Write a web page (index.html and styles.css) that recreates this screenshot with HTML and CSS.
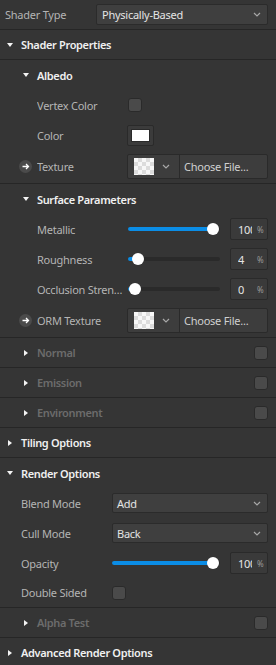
FILE: index.html
```html
<!DOCTYPE html>
<html>

<head>
    <title>Material Inspector</title>
    <meta charset="utf-8">
    <link rel="stylesheet" href="styles.css">
</head>

<body>

    <div class="inspector">

        <div class="row top sep">
            <span class="label">Shader Type</span>
            <div class="select">
                <span>Physically-Based</span>
                <svg class="chev" width="8" height="5" viewBox="0 0 8 5"><path d="M1 1 L4 4 L7 1" /></svg>
            </div>
        </div>

        <section class="panel">
            <div class="head l1 sep"><i class="tri open"></i><span>Shader Properties</span></div>

            <section class="panel">
                <div class="head l2"><i class="tri open"></i><span>Albedo</span></div>
                <div class="row l2">
                    <span class="label">Vertex Color</span>
                    <span class="check"></span>
                </div>
                <div class="row l2">
                    <span class="label">Color</span>
                    <span class="swatch"><span></span></span>
                </div>
                <div class="row tall l2 linked sep">
                    <span class="link"><svg width="13" height="13" viewBox="0 0 13 13"><path d="M3.5 6.5 H9.5 M7 4 L9.5 6.5 L7 9" /></svg></span>
                    <span class="label">Texture</span>
                    <div class="asset">
                        <span class="thumb"><span class="checker"></span>
                            <svg class="chev" width="8" height="5" viewBox="0 0 8 5"><path d="M1 1 L4 4 L7 1" /></svg>
                        </span>
                        <span class="file">Choose File...</span>
                    </div>
                </div>
            </section>

            <section class="panel">
                <div class="head l2"><i class="tri open"></i><span>Surface Parameters</span></div>
                <div class="row l2">
                    <span class="label">Metallic</span>
                    <div class="slider" style="--v: 1"><span class="fill"></span><span class="knob"></span></div>
                    <span class="num"><span class="val">100</span><span class="pct">%</span></span>
                </div>
                <div class="row l2">
                    <span class="label">Roughness</span>
                    <div class="slider" style="--v: 0.04"><span class="fill"></span><span class="knob"></span></div>
                    <span class="num"><span class="val">4</span><span class="pct">%</span></span>
                </div>
                <div class="row l2">
                    <span class="label">Occlusion Strength</span>
                    <div class="slider" style="--v: 0"><span class="fill"></span><span class="knob"></span></div>
                    <span class="num"><span class="val">0</span><span class="pct">%</span></span>
                </div>
                <div class="row tall l2 linked sep">
                    <span class="link"><svg width="13" height="13" viewBox="0 0 13 13"><path d="M3.5 6.5 H9.5 M7 4 L9.5 6.5 L7 9" /></svg></span>
                    <span class="label">ORM Texture</span>
                    <div class="asset">
                        <span class="thumb"><span class="checker"></span>
                            <svg class="chev" width="8" height="5" viewBox="0 0 8 5"><path d="M1 1 L4 4 L7 1" /></svg>
                        </span>
                        <span class="file">Choose File...</span>
                    </div>
                </div>
            </section>

            <section class="panel">
                <div class="head l2 off sep"><i class="tri"></i><span>Normal</span><span class="check"></span></div>
            </section>
            <section class="panel">
                <div class="head l2 off sep"><i class="tri"></i><span>Emission</span><span class="check"></span></div>
            </section>
            <section class="panel">
                <div class="head l2 off sep"><i class="tri"></i><span>Environment</span><span class="check"></span></div>
            </section>
        </section>

        <section class="panel">
            <div class="head l1 sep"><i class="tri"></i><span>Tiling Options</span></div>
        </section>

        <section class="panel">
            <div class="head l1"><i class="tri open"></i><span>Render Options</span></div>
            <div class="row l1">
                <span class="label">Blend Mode</span>
                <div class="select short">
                    <span>Add</span>
                    <svg class="chev" width="8" height="5" viewBox="0 0 8 5"><path d="M1 1 L4 4 L7 1" /></svg>
                </div>
            </div>
            <div class="row l1">
                <span class="label">Cull Mode</span>
                <div class="select short">
                    <span>Back</span>
                    <svg class="chev" width="8" height="5" viewBox="0 0 8 5"><path d="M1 1 L4 4 L7 1" /></svg>
                </div>
            </div>
            <div class="row l1">
                <span class="label">Opacity</span>
                <div class="slider" style="--v: 1"><span class="fill"></span><span class="knob"></span></div>
                <span class="num"><span class="val">100</span><span class="pct">%</span></span>
            </div>
            <div class="row l1 sep">
                <span class="label">Double Sided</span>
                <span class="check"></span>
            </div>
            <section class="panel">
                <div class="head l2 off sep"><i class="tri"></i><span>Alpha Test</span><span class="check"></span></div>
            </section>
        </section>

        <section class="panel">
            <div class="head l1 sep"><i class="tri"></i><span>Advanced Render Options</span></div>
        </section>

    </div>

</body>

</html>
```

FILE: styles.css
```css
* {
    box-sizing: border-box;
}

body {
    margin: 0;
    background: #353535;
    font-family: "Noto Sans", "Open Sans", sans-serif;
    font-size: 11px;
    letter-spacing: -0.25px;
    color: #b4b4b4;
    overflow: hidden;
}

.inspector {
    width: 276px;
}

.sep {
    border-bottom: 1px solid #262626;
}

/* rows */

.row {
    display: flex;
    align-items: center;
    height: 30px;
    padding-right: 8px;
}

.row.tall {
    height: 34px;
}

.row.top {
    padding-left: 5px;
}

.row.l1 {
    padding-left: 21px;
}

.row.l2 {
    padding-left: 37px;
}

.row.linked {
    padding-left: 19px;
}

.label {
    width: 91px;
    flex: none;
    white-space: nowrap;
    overflow: hidden;
    text-overflow: ellipsis;
    padding-right: 4px;
}

/* headers */

.head {
    display: flex;
    align-items: center;
    height: 30px;
    padding-right: 8px;
    color: #f0f0f0;
    font-weight: 600;
    letter-spacing: -0.35px;
}

.head.l1 {
    padding-left: 7px;
}

.head.l2 {
    padding-left: 23px;
}

.head.off {
    color: #6c6c6c;
}

.head .check {
    margin-left: auto;
}

.tri {
    width: 0;
    height: 6px;
    flex: none;
    border-top: 3px solid transparent;
    border-bottom: 3px solid transparent;
    border-left: 4px solid #f4f4f4;
    margin-left: 1px;
    margin-right: 9px;
}

.tri.open {
    width: 0;
    height: 0;
    margin-left: 0;
    margin-right: 8px;
    border-left: 3px solid transparent;
    border-right: 3px solid transparent;
    border-top: 4px solid #f4f4f4;
    border-bottom: 0;
}

/* controls */

.select {
    flex: 1;
    height: 21px;
    display: flex;
    align-items: center;
    justify-content: space-between;
    padding: 0 6px 0 5px;
    background: #3f3f3f;
    border: 1px solid #2b2b2b;
    border-radius: 2px;
    color: #e4e4e4;
}

.select.short {
    height: 20px;
    padding-left: 4px;
}

.chev path {
    fill: none;
    stroke: #a8a8a8;
    stroke-width: 1.2;
}

.check {
    width: 14px;
    height: 14px;
    flex: none;
    background: #4a4a4a;
    border: 1px solid #2a2a2a;
    border-radius: 3px;
}

.swatch {
    margin-left: -1px;
    width: 27px;
    height: 21px;
    padding: 3px;
    background: #3b3b3b;
    border: 1px solid #2a2a2a;
    border-radius: 2px;
}

.swatch span {
    display: block;
    width: 100%;
    height: 100%;
    background: #ffffff;
    border: 1px solid #2a2a2a;
}

.link {
    width: 13px;
    height: 13px;
    flex: none;
    margin-right: 5px;
    border-radius: 50%;
    background: #4b4b4b;
    display: flex;
}

.link path {
    fill: none;
    stroke: #ffffff;
    stroke-width: 1.3;
}

.asset {
    margin-left: -1px;
    flex: 1;
    height: 25px;
    display: flex;
    background: #3d3d3d;
    border: 1px solid #2a2a2a;
    border-radius: 2px;
}

.thumb {
    width: 52px;
    flex: none;
    display: flex;
    align-items: center;
    padding-left: 6px;
    border-right: 1px solid #2a2a2a;
}

.checker {
    width: 20px;
    height: 17px;
    margin-right: 8px;
    background-color: #f7f7f7;
    background-image: conic-gradient(#dcdcdc 25%, #f7f7f7 0 50%, #dcdcdc 0 75%, #f7f7f7 0);
    background-size: 8px 8px;
}

.file {
    display: flex;
    align-items: center;
    padding-left: 4px;
    color: #d0d0d0;
}

.slider {
    position: relative;
    flex: 1;
    height: 12px;
    margin-right: 10px;
}

.slider::before {
    content: "";
    position: absolute;
    left: 0;
    right: 0;
    top: 4px;
    height: 4px;
    border-radius: 2px;
    background: #2a2a2a;
}

.fill {
    position: absolute;
    left: 0;
    top: 4px;
    height: 4px;
    border-radius: 2px;
    background: #0b8de6;
    width: calc(var(--v) * (100% - 14px) + 7px);
}

.knob {
    position: absolute;
    top: 0;
    left: calc(1px + var(--v) * (100% - 14px));
    width: 12px;
    height: 12px;
    border-radius: 50%;
    background: #ffffff;
}

.num {
    width: 38px;
    height: 22px;
    flex: none;
    display: flex;
    align-items: center;
    padding-left: 7px;
    background: #3a3a3a;
    border: 1px solid #2a2a2a;
    border-radius: 2px;
    color: #e6e6e6;
}

.num .val {
    width: 14px;
    overflow: hidden;
    white-space: nowrap;
}

.num .pct {
    margin-left: 5px;
    font-size: 8px;
    color: #9a9a9a;
}
```
